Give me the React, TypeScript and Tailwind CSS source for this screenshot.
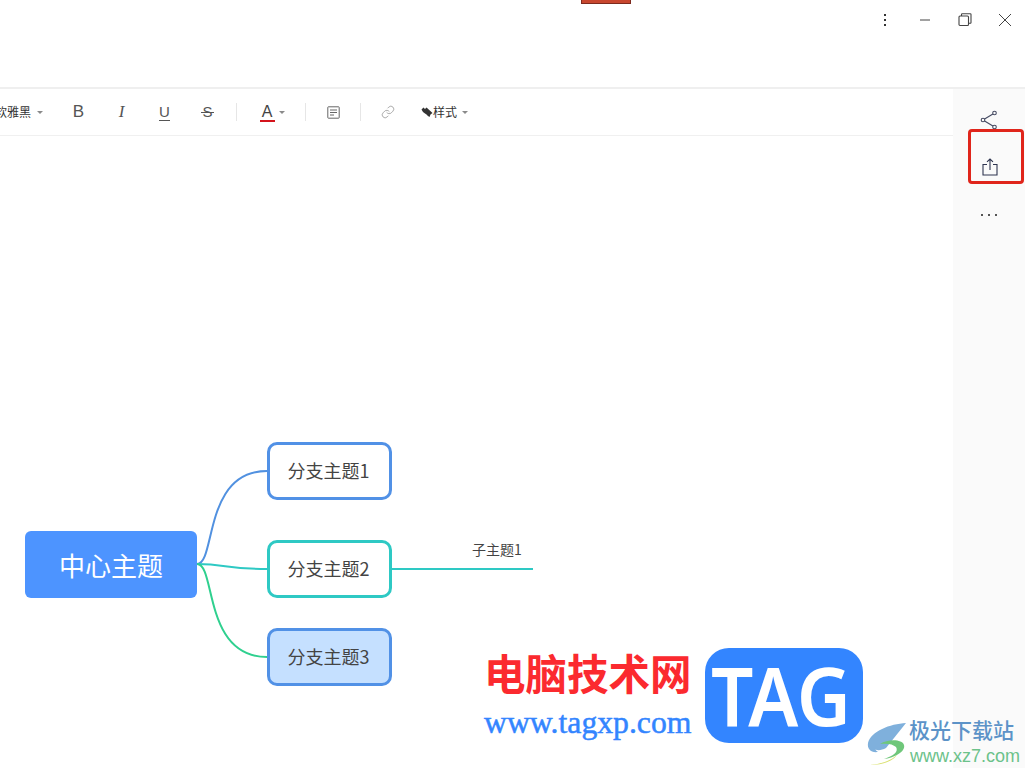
import { Link as LinkIcon } from 'lucide-react';

const cjk = "font-['Noto_Sans_CJK_SC','Liberation_Sans',sans-serif]";

function Caret() {
  return <span className="inline-block h-0 w-0 border-x-[3px] border-t-[3px] border-x-transparent border-t-[#8a8a8a]" />;
}

function Sep({ className }: { className: string }) {
  return <span className={`h-[18px] w-px shrink-0 bg-[#e6e6e6] ${className}`} />;
}

function TopicNode({ label, className }: { label: string; className: string }) {
  return (
    <div className={`absolute left-[267px] flex h-[58px] w-[125px] items-center justify-center rounded-[10px] border-[3px] pr-[2px] pb-[2px] text-[18px] text-[#444] ${className}`}>
      {label}
    </div>
  );
}

export default function App() {
  return (
    <div className={`relative flex h-screen w-full flex-col overflow-hidden bg-white ${cjk}`}>
      {/* title bar */}
      <header className="relative flex h-[89px] shrink-0 items-start justify-end border-b-2 border-[#efefef]">
        <div className="absolute left-[581px] top-0 h-1 w-[50px] border-x border-b border-[#7d2a1e] bg-[#c8472f]" />
        <div className="flex h-10 items-center text-[#444]">
          <button className="flex h-10 w-10 items-center justify-center">
            <svg width="4" height="14" viewBox="0 0 4 14" fill="#333">
              <rect x="1" y="1" width="2" height="2" />
              <rect x="1" y="6" width="2" height="2" />
              <rect x="1" y="11" width="2" height="2" />
            </svg>
          </button>
          <button className="flex h-10 w-10 items-center justify-center">
            <svg width="12" height="2" viewBox="0 0 12 2"><path d="M1 1h10" stroke="#444" strokeWidth="1" /></svg>
          </button>
          <button className="flex h-10 w-10 items-center justify-center">
            <svg width="14" height="14" viewBox="0 0 14 14" fill="none" stroke="#444" strokeWidth="1.1">
              <rect x="1" y="3" width="9.5" height="9.5" rx="1" />
              <path d="M3.5 3V1.5a.7.7 0 0 1 .7-.7h8.1a.7.7 0 0 1 .7.7v8.1a.7.7 0 0 1-.7.7h-1.8" />
            </svg>
          </button>
          <button className="flex h-10 w-10 items-center justify-center">
            <svg width="14" height="14" viewBox="0 0 14 14" fill="none" stroke="#444" strokeWidth="1">
              <path d="M1 1l12 12M13 1L1 13" />
            </svg>
          </button>
        </div>
      </header>

      <div className="flex min-h-0 flex-1">
        <main className="relative flex min-w-0 flex-1 flex-col">
          {/* format toolbar */}
          <div className="flex h-[47px] shrink-0 items-center border-b border-[#f0f0f0] text-[#444]">
            <span className="-ml-[17px] w-[48px] shrink-0 text-[12px] leading-[16px] text-[#333]">微软雅黑</span>
            <span className="ml-[6px] flex w-[6px] justify-center"><Caret /></span>
            <span className="ml-[14px] w-[43px] text-center font-['Liberation_Sans'] text-[17px] text-[#555]">B</span>
            <span className="w-[43px] text-center font-['Liberation_Serif'] text-[17px] italic text-[#555]">I</span>
            <span className="flex w-[43px] flex-col items-center font-['Liberation_Sans'] text-[15px] leading-[16px] text-[#555]">
              U
              <span className="h-px w-[11px] bg-[#555]" />
            </span>
            <span className="relative flex w-[43px] justify-center font-['Liberation_Sans'] text-[15px] text-[#555]">
              S
              <span className="absolute left-[15px] top-1/2 h-px w-[13px] bg-[#555]" />
            </span>
            <Sep className="ml-[7px]" />
            <span className="ml-[22px] flex w-[16px] flex-col items-center font-['Liberation_Sans'] text-[16px] leading-[17px] text-[#444]">
              A
              <span className="h-[2px] w-[15px] bg-[#d4141c]" />
            </span>
            <span className="ml-[4px] flex w-[6px] justify-center"><Caret /></span>
            <Sep className="ml-[20px]" />
            <span className="ml-[20px] flex w-[14px] justify-center">
              <svg width="13" height="13" viewBox="0 0 13 13" fill="none" stroke="#666" strokeWidth="1">
                <rect x="0.8" y="0.8" width="11.4" height="11.4" rx="0.6" />
                <path d="M3 4h7M3 6.5h7M3 9h4" />
              </svg>
            </span>
            <Sep className="ml-[20px]" />
            <span className="ml-[20px] flex w-[14px] justify-center">
              <LinkIcon size={14} strokeWidth={1.25} color="#8e8e8e" />
            </span>
            <span className="ml-[26px] flex w-[12px] justify-center">
              <svg width="12" height="11" viewBox="0 0 12 11" fill="#333">
                <path d="M0.5 2.5L2.5 0.5l1.5 1.5L5.5 0.5l6 5.5-2 1.5L8.5 10 7 9 5.5 7.5 4 6.5 2 5z" />
              </svg>
            </span>
            <span className="w-[24px] shrink-0 text-[12px] leading-[16px] text-[#333]">样式</span>
            <span className="ml-[5px] flex w-[6px] justify-center"><Caret /></span>
          </div>

          {/* mind map canvas */}
          <div className="relative min-h-0 flex-1">
            <svg className="absolute left-0 top-0" width="953" height="632" viewBox="0 136 953 632" fill="none" strokeWidth="2">
              <path d="M197 564C216 564 203 471 267 471" stroke="#5191e0" />
              <path d="M197 564C226 564 226 569 267 569" stroke="#2ec9c4" />
              <path d="M197 564C216 564 203 657 267 657" stroke="#2fd08f" />
              <path d="M392 569H533" stroke="#2ec9c4" />
            </svg>
            <div className="absolute left-[25px] top-[395px] flex h-[67px] w-[172px] items-center justify-center rounded-[6px] bg-[#4d94ff] text-[26px] text-white">
              中心主题
            </div>
            <TopicNode label="分支主题1" className="top-[306px] border-[#5191e6] bg-white" />
            <TopicNode label="分支主题2" className="top-[404px] border-[#2ec9c4] bg-white" />
            <TopicNode label="分支主题3" className="top-[492px] border-[#5191e6] bg-[#c5e0ff]" />
            <span className="absolute left-[472px] top-[403px] text-[14px] leading-5 text-[#444]">子主题1</span>
          </div>
        </main>

        {/* right rail */}
        <aside className="flex w-[72px] shrink-0 flex-col items-center bg-[#fafafa] pt-[19px]">
          <button className="flex h-[24px] w-full items-center justify-center">
            <svg width="18" height="20" viewBox="0 0 18 20" fill="none" stroke="#454a62" strokeWidth="1.1">
              <circle cx="3" cy="10" r="1.8" />
              <circle cx="14.5" cy="3" r="1.8" />
              <circle cx="14.5" cy="17" r="1.8" />
              <path d="M4.6 9l8.3-5M4.6 11l8.3 5" />
            </svg>
          </button>
          <button className="mt-[23px] flex h-[24px] w-full items-center justify-center pl-px">
            <svg width="16" height="18" viewBox="0 0 16 18" fill="none" stroke="#2f3550" strokeWidth="1.1">
              <path d="M5 6.5H1v10.5h14V6.5h-4" />
              <path d="M8 12V1M5 3.8L8 1l3 2.8" />
            </svg>
          </button>
          <button className="mt-[24px] flex h-[24px] w-full items-center justify-center">
            <svg width="16" height="2" viewBox="0 0 16 2" fill="#555">
              <rect x="0" y="0" width="2" height="2" />
              <rect x="7" y="0" width="2" height="2" />
              <rect x="14" y="0" width="2" height="2" />
            </svg>
          </button>
        </aside>
      </div>

      {/* annotation box */}
      <div className="absolute left-[968px] top-[129px] h-[55px] w-[56px] rounded-[4px] border-[3px] border-[#e0251b]" />

      {/* site watermark */}
      <div className="absolute left-[484px] top-[647px] text-[41.5px] font-bold leading-[50px] text-[#fb2a2f]">电脑技术网</div>
      <div className="absolute left-[484px] top-[706px] font-['Liberation_Serif'] text-[31.7px] leading-[34px] text-[#3385ff] [-webkit-text-stroke:0.5px_#3385ff]">www.tagxp.com</div>
      <div className="absolute left-[705px] top-[648px] flex h-[95px] w-[158px] items-center justify-center rounded-[24px] bg-[#3385ff] pr-[6px] pb-[3px] font-['Noto_Sans'] text-[81px] font-semibold leading-none text-white">
        <span className="scale-x-[.92]">TAG</span>
      </div>
      <svg className="absolute left-[866px] top-[722px]" width="44" height="44" viewBox="0 0 44 44" fill="none">
        <path d="M40 1C24 2 5 9 2 21c-1 6 3 10 10 9-5-3-4-7 1-10 4-2 9-3 13-4C16 13 6 16 6 23c0 5 7 7 14 3" fill="#7fb0dc" />
        <path d="M14 22c8-5 22-5 24 1 2 7-11 13-20 14 9-3 15-7 12-12-3-3-9-4-16-3z" fill="#6fc77a" />
        <path d="M4 43c9-1 19-3 27-10-4 6-14 10-27 10z" fill="#d9e06c" />
      </svg>
      <div className="absolute left-[909px] top-[715px] text-[21px] font-medium leading-7 text-[#5c93c8]">极光下载站</div>
      <div className="absolute left-[910px] top-[745px] font-['Liberation_Sans'] text-[18px] leading-[22px] text-[#6cc28a]">www.xz7.com</div>
    </div>
  );
}
